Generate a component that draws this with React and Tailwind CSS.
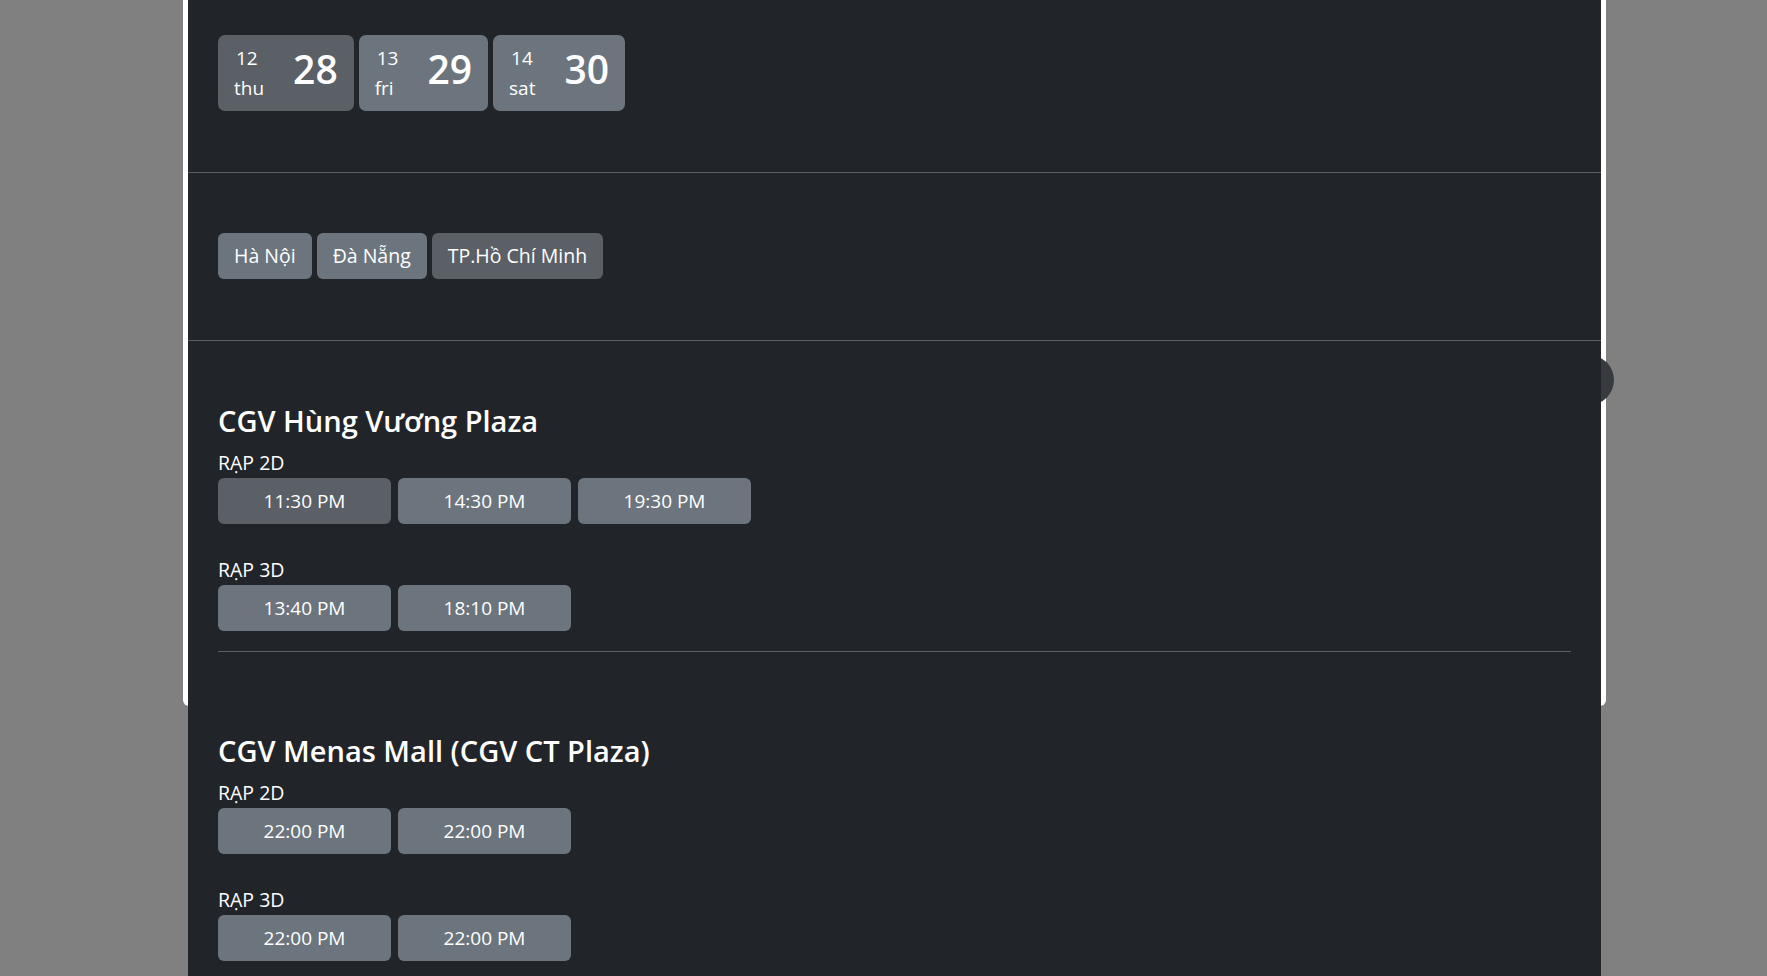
import React, { useState } from 'react';

const dates = [
  { month: '12', day: 'thu', num: '28' },
  { month: '13', day: 'fri', num: '29' },
  { month: '14', day: 'sat', num: '30' },
];

const cities = ['Hà Nội', 'Đà Nẵng', 'TP.Hồ Chí Minh'];

const theaters = [
  {
    name: 'CGV Hùng Vương Plaza',
    rooms: [
      { label: 'RẠP 2D', times: ['11:30 PM', '14:30 PM', '19:30 PM'] },
      { label: 'RẠP 3D', times: ['13:40 PM', '18:10 PM'] },
    ],
  },
  {
    name: 'CGV Menas Mall (CGV CT Plaza)',
    rooms: [
      { label: 'RẠP 2D', times: ['22:00 PM', '22:00 PM'] },
      { label: 'RẠP 3D', times: ['22:00 PM', '22:00 PM'] },
    ],
  },
];

export default function App() {
  const [date, setDate] = useState(0);
  const [city, setCity] = useState(2);
  const [picked, setPicked] = useState('0-0-0');

  return (
    <div
      className="h-screen overflow-hidden bg-[#808080] text-white"
      style={{ fontFamily: '"Segoe UI", "Open Sans", "Noto Sans", sans-serif' }}
    >
      <div className="relative ml-[183px] w-[1423px]">
        {/* modal frame */}
        <div className="absolute left-0 right-0 top-0 h-[706px] rounded-b-md bg-white" />
        <div className="absolute left-[1381px] top-[355px] h-[50px] w-[50px] rounded-full bg-[#373b40]" />

        <div className="relative z-10 mx-[5px] bg-[#212529]">
          {/* dates */}
          <div className="border-b border-[#5b5e62] px-[30px] pt-[35px] pb-[61px]">
            <div className="flex gap-[5px]">
              {dates.map((d, i) => (
                <button
                  key={d.num}
                  onClick={() => setDate(i)}
                  className={`flex h-[76px] items-center gap-[29px] rounded-[7px] pl-[16px] pr-[16px] ${
                    i === date ? 'bg-[#5a6066]' : 'bg-[#6c757d]'
                  }`}
                >
                  <div className="flex flex-col items-start text-[19px] leading-[30px]">
                    <span className="pl-[2px]">{d.month}</span>
                    <span>{d.day}</span>
                  </div>
                  <span className="-mt-[8px] text-[39px] font-semibold leading-[48px]">{d.num}</span>
                </button>
              ))}
            </div>
          </div>

          {/* cities */}
          <div className="border-b border-[#5b5e62] px-[30px] pt-[60px] pb-[61px]">
            <div className="flex gap-[5px]">
              {cities.map((c, i) => (
                <button
                  key={c}
                  onClick={() => setCity(i)}
                  className={`h-[46px] rounded-md px-[16px] text-[19.5px] leading-[30px] ${
                    i === city ? 'bg-[#5a6066]' : 'bg-[#6c757d]'
                  }`}
                >
                  {c}
                </button>
              ))}
            </div>
          </div>

          {/* theaters */}
          <div className="px-[30px] pt-[63px]">
            {theaters.map((t, ti) => (
              <div key={t.name} className={ti === 0 ? 'border-b border-[#5b5e62] pb-[20px]' : 'pt-[82px]'}>
                <h3 className="text-[29px] font-semibold leading-[33px]">{t.name}</h3>
                <div className="mt-[11px] flex flex-col gap-[31px]">
                  {t.rooms.map((r, ri) => (
                    <div key={r.label}>
                      <div className="text-[19.5px] leading-[30px]">{r.label}</div>
                      <div className="flex gap-[7px]">
                        {r.times.map((tm, k) => {
                          const id = `${ti}-${ri}-${k}`;
                          return (
                            <button
                              key={id}
                              onClick={() => setPicked(id)}
                              className={`h-[46px] w-[173px] rounded-md text-[19px] ${
                                picked === id ? 'bg-[#5a6066]' : 'bg-[#6c757d]'
                              }`}
                            >
                              {tm}
                            </button>
                          );
                        })}
                      </div>
                    </div>
                  ))}
                </div>
              </div>
            ))}
            <div className="h-[40px]" />
          </div>
        </div>
      </div>
    </div>
  );
}
